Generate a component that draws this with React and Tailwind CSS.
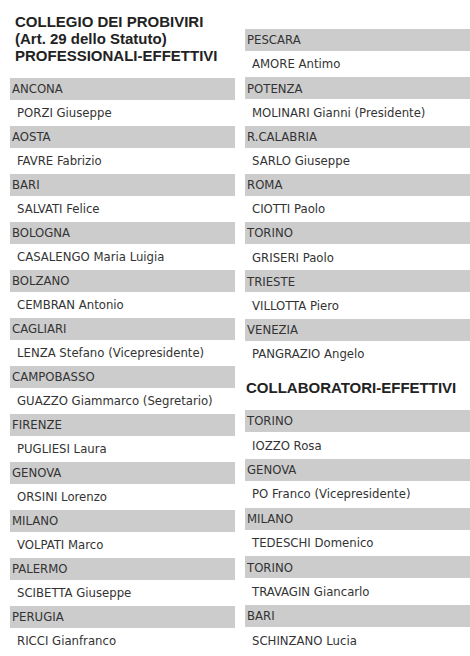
import React from "react";

const professionali = [
  ["ANCONA", "PORZI Giuseppe"],
  ["AOSTA", "FAVRE Fabrizio"],
  ["BARI", "SALVATI Felice"],
  ["BOLOGNA", "CASALENGO Maria Luigia"],
  ["BOLZANO", "CEMBRAN Antonio"],
  ["CAGLIARI", "LENZA Stefano (Vicepresidente)"],
  ["CAMPOBASSO", "GUAZZO Giammarco (Segretario)"],
  ["FIRENZE", "PUGLIESI Laura"],
  ["GENOVA", "ORSINI Lorenzo"],
  ["MILANO", "VOLPATI Marco"],
  ["PALERMO", "SCIBETTA Giuseppe"],
  ["PERUGIA", "RICCI Gianfranco"],
];

const professionaliRight = [
  ["PESCARA", "AMORE Antimo"],
  ["POTENZA", "MOLINARI Gianni (Presidente)"],
  ["R.CALABRIA", "SARLO Giuseppe"],
  ["ROMA", "CIOTTI Paolo"],
  ["TORINO", "GRISERI Paolo"],
  ["TRIESTE", "VILLOTTA Piero"],
  ["VENEZIA", "PANGRAZIO Angelo"],
];

const collaboratori = [
  ["TORINO", "IOZZO Rosa"],
  ["GENOVA", "PO Franco (Vicepresidente)"],
  ["MILANO", "TEDESCHI Domenico"],
  ["TORINO", "TRAVAGIN Giancarlo"],
  ["BARI", "SCHINZANO Lucia"],
];

// nameH differs a touch per column, the source table is not perfectly regular
function Entry({ city, name, nameH = "h-[26px]" }) {
  return (
    <div>
      <div className="h-[22px] bg-[#cccccc] pl-[2px] flex items-center">{city}</div>
      <div className={nameH + " pl-[7px] flex items-center"}>{name}</div>
    </div>
  );
}

export default function App() {
  return (
    <div
      className="w-[470px] h-[656px] bg-white overflow-hidden flex gap-[10px] pl-[10px] text-[13px] text-[#333333]"
      style={{ fontFamily: '"DejaVu Sans Condensed", "DejaVu Sans", sans-serif' }}
    >
      <div className="w-[225px] flex flex-col">
        <h2 className="h-[78px] pt-[13px] pl-[5px] text-[15px] leading-[17px] font-bold text-[#222222] font-['Liberation_Sans',Arial,sans-serif]">
          COLLEGIO DEI PROBIVIRI
          <br />
          (Art. 29 dello Statuto)
          <br />
          PROFESSIONALI-EFFETTIVI
        </h2>
        {professionali.map(([c, n]) => (
          <Entry key={c} city={c} name={n} />
        ))}
      </div>
      <div className="w-[225px] flex flex-col pt-[29px]">
        {professionaliRight.map(([c, n]) => (
          <Entry key={c} city={c} name={n} nameH="h-[26.3px]" />
        ))}
        <h2 className="h-[43px] pt-[12px] pl-[1px] text-[15px] leading-[17px] font-bold text-[#222222] font-['Liberation_Sans',Arial,sans-serif]">
          COLLABORATORI-EFFETTIVI
        </h2>
        {collaboratori.map(([c, n], i) => (
          <Entry key={i} city={c} name={n} nameH="h-[26.75px]" />
        ))}
      </div>
    </div>
  );
}
